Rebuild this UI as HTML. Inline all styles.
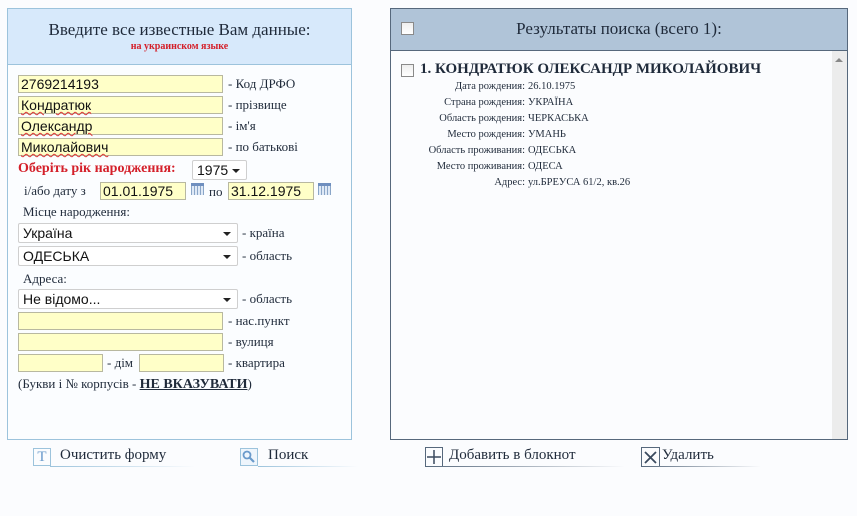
<!DOCTYPE html>
<html><head><meta charset="utf-8"><style>
body{margin:0;width:857px;height:516px;background:#fbfcfe;position:relative;overflow:hidden;font-family:"Liberation Serif",serif;color:#1f2a3a}
.a{position:absolute;white-space:nowrap}
.in{position:absolute;height:18px;background:#ffffc8;border:1px solid #b8b8a0;font:14px "Liberation Sans",sans-serif;line-height:17px;padding-left:2px;box-sizing:border-box;color:#111}
.sel{position:absolute;height:20px;background:#fff;border:1px solid #cfcfcf;border-radius:2px;font:14px "Liberation Sans",sans-serif;line-height:18px;padding-left:4px;box-sizing:border-box;color:#111}
.sel:after{content:"";position:absolute;right:6px;top:8px;border:4px solid transparent;border-top:4px solid #222;border-bottom:0}
.l{font-size:13px}
.cal{position:absolute;width:13px;height:12px;background:repeating-linear-gradient(90deg,#8aa6c8 0 1px,#dfe9f6 1px 3px);border-top:3px solid #6f8fbf;box-sizing:border-box}
.cb{position:absolute;width:11px;height:11px;border:1px solid #8a8a8a;background:linear-gradient(#eee,#fff)}
.rl{position:absolute;width:140px;text-align:right;font-size:10.5px;left:385px}
.rv{position:absolute;left:528px;font-size:10.5px}
.u{text-decoration:underline wavy #d33;text-decoration-thickness:1px}
</style></head><body>
<div class="a" style="left:7px;top:8px;width:343px;height:430px;border:1px solid #9cc3dc;background:#fbfdff"></div>
<div class="a" style="left:8px;top:9px;width:343px;height:55px;background:#d7e9fb;border-bottom:1px solid #9cc3dc"></div>
<div class="a" style="left:8px;top:20px;width:343px;text-align:center;font-size:17px">Введите все известные Вам данные:</div>
<div class="a" style="left:8px;top:41px;width:343px;text-align:center;font-size:10px;font-weight:bold;color:#d4202a">на украинском языке</div>

<div class="in" style="left:18px;top:75px;width:205px">2769214193</div><div class="a l" style="left:228px;top:76px">- Код ДРФО</div>
<div class="in" style="left:18px;top:96px;width:205px"><span class="u">Кондратюк</span></div><div class="a l" style="left:228px;top:97px">- прізвище</div>
<div class="in" style="left:18px;top:117px;width:205px"><span class="u">Олександр</span></div><div class="a l" style="left:228px;top:118px">- ім'я</div>
<div class="in" style="left:18px;top:138px;width:205px"><span class="u">Миколайович</span></div><div class="a l" style="left:228px;top:139px">- по батькові</div>
<div class="a" style="left:18px;top:161px;font-size:14px;font-weight:bold;color:#d4202a">Оберіть рік народження:</div>
<div class="sel" style="left:192px;top:160px;width:55px">1975</div>
<div class="a l" style="left:24px;top:183px">і/або дату з</div>
<div class="in" style="left:100px;top:182px;width:86px">01.01.1975</div><div class="cal" style="left:191px;top:183px"></div>
<div class="a l" style="left:209px;top:184px">по</div>
<div class="in" style="left:228px;top:182px;width:86px">31.12.1975</div><div class="cal" style="left:318px;top:183px"></div>
<div class="a l" style="left:23px;top:204px">Місце народження:</div>
<div class="sel" style="left:18px;top:223px;width:220px">Україна</div><div class="a l" style="left:242px;top:225px">- країна</div>
<div class="sel" style="left:18px;top:246px;width:220px">ОДЕСЬКА</div><div class="a l" style="left:242px;top:248px">- область</div>
<div class="a l" style="left:23px;top:271px">Адреса:</div>
<div class="sel" style="left:18px;top:289px;width:220px">Не відомо...</div><div class="a l" style="left:242px;top:291px">- область</div>
<div class="in" style="left:18px;top:312px;width:205px"></div><div class="a l" style="left:228px;top:313px">- нас.пункт</div>
<div class="in" style="left:18px;top:333px;width:205px"></div><div class="a l" style="left:228px;top:334px">- вулиця</div>
<div class="in" style="left:18px;top:354px;width:85px"></div><div class="a l" style="left:107px;top:355px">- дім</div>
<div class="in" style="left:139px;top:354px;width:85px"></div><div class="a l" style="left:228px;top:355px">- квартира</div>
<div class="a l" style="left:18px;top:376px">(Букви і № корпусів - <b style="text-decoration:underline;font-size:14px">НЕ ВКАЗУВАТИ</b>)</div>

<div class="a" style="left:33px;top:448px;width:16px;height:16px;border:1px solid #9cc3dc;color:#6a9acb;font-size:15px;text-align:center;line-height:17px">T</div>
<div class="a" style="left:60px;top:447px;font-size:15px">Очистить форму</div>
<div class="a" style="left:50px;top:466px;width:145px;height:1px;background:linear-gradient(90deg,#9cc3dc,#fbfcfe)"></div>
<div class="a" style="left:240px;top:448px;width:16px;height:16px;border:1px solid #9cc3dc;background:#eef5fc"><svg width="16" height="16"><circle cx="6" cy="6" r="3.5" fill="none" stroke="#6a9acb" stroke-width="1.8"/><path d="M8.5 8.5 13 13" stroke="#6a9acb" stroke-width="2.2"/></svg></div>
<div class="a" style="left:268px;top:447px;font-size:15px">Поиск</div>
<div class="a" style="left:258px;top:466px;width:100px;height:1px;background:linear-gradient(90deg,#9cc3dc,#fbfcfe)"></div>

<div class="a" style="left:390px;top:8px;width:456px;height:430px;border:1px solid #56687c;background:#fbfcfe"></div>
<div class="a" style="left:391px;top:9px;width:456px;height:41px;background:#b0c4d8;border-bottom:1px solid #56687c"></div>
<div class="cb" style="left:401px;top:22px"></div>
<div class="a" style="left:391px;top:19px;width:456px;text-align:center;font-size:17px">Результаты поиска (всего 1):</div>
<div class="a" style="left:832px;top:51px;width:15px;height:388px;background:#ececec"></div>
<div class="a" style="left:835px;top:58px;border:4px solid transparent;border-bottom:4px solid #888;border-top:0"></div>
<div class="cb" style="left:401px;top:64px"></div>
<div class="a" style="left:420px;top:61px;font-size:15px;font-weight:bold">1. КОНДРАТЮК ОЛЕКСАНДР МИКОЛАЙОВИЧ</div>
<div class="rl" style="top:81px">Дата рождения:</div><div class="rv" style="top:81px">26.10.1975</div>
<div class="rl" style="top:97px">Страна рождения:</div><div class="rv" style="top:97px">УКРАЇНА</div>
<div class="rl" style="top:113px">Область рождения:</div><div class="rv" style="top:113px">ЧЕРКАСЬКА</div>
<div class="rl" style="top:129px">Место рождения:</div><div class="rv" style="top:129px">УМАНЬ</div>
<div class="rl" style="top:145px">Область проживания:</div><div class="rv" style="top:145px">ОДЕСЬКА</div>
<div class="rl" style="top:161px">Место проживания:</div><div class="rv" style="top:161px">ОДЕСА</div>
<div class="rl" style="top:177px">Адрес:</div><div class="rv" style="top:177px">ул.БРЕУСА 61/2, кв.26</div>

<div class="a" style="left:425px;top:447px;width:16px;height:18px;border:1px solid #56687c"><svg width="16" height="18"><path d="M8 2v14M1 9h14" stroke="#3a4a5e" stroke-width="1.5"/></svg></div>
<div class="a" style="left:449px;top:447px;font-size:15px">Добавить в блокнот</div>
<div class="a" style="left:425px;top:466px;width:200px;height:1px;background:linear-gradient(90deg,#56687c,#fbfcfe)"></div>
<div class="a" style="left:641px;top:447px;width:17px;height:18px;border:1px solid #56687c"><svg width="17" height="18"><path d="M3 4l11 11M14 4 3 15" stroke="#3a4a5e" stroke-width="1.8"/></svg></div>
<div class="a" style="left:662px;top:447px;font-size:15px">Удалить</div>
<div class="a" style="left:641px;top:466px;width:120px;height:1px;background:linear-gradient(90deg,#56687c,#fbfcfe)"></div>
</body></html>
